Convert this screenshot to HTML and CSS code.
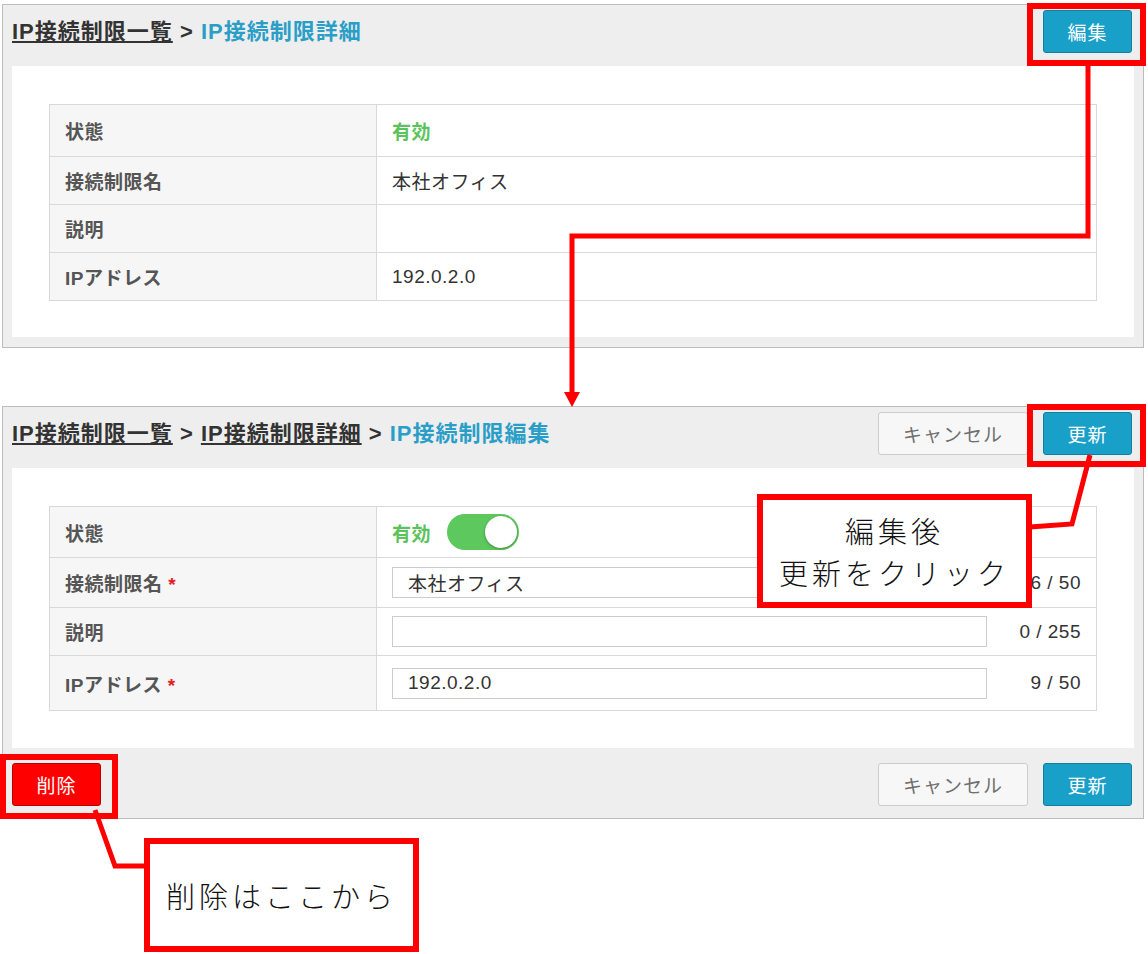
FILE: index.html
```html
<!DOCTYPE html>
<html lang="ja">
<head>
    <meta charset="UTF-8">
    <meta name="viewport" content="width=device-width, initial-scale=1.0">
    <title>IP接続制限</title>
<link rel="stylesheet" href="styles.css">
</head>
<body>
    <div class="page">
        <!-- 詳細画面 -->
        <section class="panel">
            <header class="panel-head">
                <h1 class="crumbs"><a href="#">IP接続制限一覧</a> &gt; <span class="current">IP接続制限詳細</span></h1>
                <div class="actions">
                    <button class="btn btn-primary">編集</button>
                </div>
            </header>
            <div class="panel-body">
                <table class="detail">
                    <tr class="row-status"><th>状態</th><td><span class="status-on">有効</span></td></tr>
                    <tr><th>接続制限名</th><td>本社オフィス</td></tr>
                    <tr><th>説明</th><td></td></tr>
                    <tr><th>IPアドレス</th><td>192.0.2.0</td></tr>
                </table>
            </div>
        </section>

        <!-- 編集画面 -->
        <section class="panel panel-edit">
            <header class="panel-head">
                <h1 class="crumbs"><a href="#">IP接続制限一覧</a> &gt; <a href="#">IP接続制限詳細</a> &gt; <span class="current">IP接続制限編集</span></h1>
                <div class="actions">
                    <button class="btn btn-cancel">キャンセル</button>
                    <button class="btn btn-primary">更新</button>
                </div>
            </header>
            <div class="panel-body">
                <table class="detail form">
                    <tr class="row-status">
                        <th>状態</th>
                        <td><div class="switch-wrap"><span class="status-on">有効</span><span class="switch"></span></div></td>
                    </tr>
                    <tr>
                        <th>接続制限名 <span class="req">*</span></th>
                        <td><div class="field"><input type="text" value="本社オフィス"><span class="count">6 / 50</span></div></td>
                    </tr>
                    <tr class="row-desc">
                        <th>説明</th>
                        <td><div class="field"><input type="text" value=""><span class="count">0 / 255</span></div></td>
                    </tr>
                    <tr class="row-ip">
                        <th>IPアドレス <span class="req">*</span></th>
                        <td><div class="field"><input type="text" value="192.0.2.0"><span class="count">9 / 50</span></div></td>
                    </tr>
                </table>
            </div>
            <footer class="panel-foot">
                <button class="btn btn-danger">削除</button>
                <div class="actions">
                    <button class="btn btn-cancel">キャンセル</button>
                    <button class="btn btn-primary">更新</button>
                </div>
            </footer>
        </section>

        <!-- 注釈 -->
        <svg class="marks" width="1148" height="954" viewBox="0 0 1148 954">
            <g fill="none" stroke="#ff0000">
                <rect x="1030" y="6" width="113" height="57" stroke-width="6"/>
                <polyline points="1088,66 1088,236 572,236 572,394" stroke-width="5"/>
                <rect x="1030" y="407" width="113" height="57" stroke-width="6"/>
                <polyline points="1090,455 1072,524 1030,527" stroke-width="5"/>
                <rect x="3" y="757" width="112" height="59" stroke-width="6"/>
                <polyline points="95,810 115,866 148,866" stroke-width="5"/>
            </g>
            <polygon points="564,392 580,392 572,407" fill="#ff0000"/>
        </svg>
        <div class="note note-update"><span class="note-line">編集後</span><span class="note-line">更新をクリック</span></div>
        <div class="note note-delete"><span class="note-line">削除はここから</span></div>
    </div>
</body>
</html>
```

FILE: styles.css
```css
*{
    box-sizing: border-box;
}
body{
    margin: 0;
    font-family: "Liberation Sans", "Noto Sans CJK JP", sans-serif;
    color: #333;
    background: #fff;
}
.page{
    position: relative;
    width: 1148px;
    height: 954px;
    padding: 4px 4px 0 2px;
    overflow: hidden;
}
.panel{
    background: #eee;
    border: 1px solid #bcbcbc;
}
.panel-edit{
    margin-top: 58px;
}
.panel-head{
    height: 61px;
    display: flex;
    justify-content: space-between;
    align-items: flex-start;
    padding: 5px 11px 0 9px;
}
.crumbs{
    margin: 0;
    font-size: 22px;
    line-height: 43px;
    font-weight: bold;
    letter-spacing: 1px;
    color: #333;
}
.crumbs a{
    color: #333;
    text-decoration: underline;
}
.crumbs .current{
    color: #2b9ec8;
}
.actions{
    display: flex;
    gap: 15px;
}
.panel-body{
    background: #fff;
    margin: 0 9px 10px;
    padding: 38px 37px 36px;
}
.panel-edit .panel-body{
    margin-bottom: 0;
    padding: 38px 37px 37px;
}
.panel-foot{
    height: 70px;
    display: flex;
    justify-content: space-between;
    align-items: flex-start;
    padding: 15px 11px 0 9px;
}

/* テーブル */
.detail{
    width: 100%;
    border-collapse: collapse;
    font-size: 19px;
    letter-spacing: 0.5px;
}
.detail th,
.detail td{
    border: 1px solid #d9d9d9;
    height: 48px;
    padding: 0 15px;
    text-align: left;
}
.detail th{
    width: 327px;
    background: #f6f6f6;
    color: #555;
    font-weight: bold;
}
.detail td{
    color: #333;
}
.detail .row-status th,
.detail .row-status td{
    height: 52px;
}
.status-on{
    color: #5cc35c;
    font-weight: bold;
}
.req{
    color: #e02020;
}
.form th,
.form td{
    padding-top: 0;
    padding-bottom: 0;
}
.form tr th,
.form tr td{
    height: 50px;
}
.form .row-status th,
.form .row-status td{
    height: 51px;
}
.form .row-desc th,
.form .row-desc td{
    height: 48px;
}
.form .row-ip th,
.form .row-ip td{
    height: 55px;
}

/* 入力欄 */
.field{
    display: flex;
    align-items: center;
}
.field input{
    flex: 1;
    height: 31px;
    border: 1px solid #ccc;
    padding: 0 15px;
    font-family: inherit;
    font-size: 19px;
    letter-spacing: 0.5px;
    color: #333;
}
.count{
    width: 94px;
    text-align: right;
}
.switch-wrap{
    display: flex;
    align-items: center;
    gap: 16px;
}
.switch{
    position: relative;
    width: 72px;
    height: 36px;
    border-radius: 18px;
    background: #5dc85d;
}
.switch::after{
    content: "";
    position: absolute;
    top: 2px;
    right: 2px;
    width: 32px;
    height: 32px;
    border-radius: 50%;
    background: #fff;
    box-shadow: 0 1px 3px rgba(0, 0, 0, 0.3);
}

/* ボタン */
.btn{
    height: 43px;
    padding: 0;
    border-radius: 3px;
    font-family: inherit;
    font-size: 19px;
    letter-spacing: 1px;
    cursor: pointer;
}
.btn-primary{
    width: 89px;
    background: #18a0c9;
    border: 1px solid #11809f;
    color: #fff;
}
.btn-cancel{
    width: 150px;
    background: #f7f7f7;
    border: 1px solid #ccc;
    color: #6f6f6f;
}
.btn-danger{
    width: 89px;
    background: #f00;
    border: 1px solid #b00;
    color: #fff;
}

/* 注釈 */
.marks{
    position: absolute;
    top: 0;
    left: 0;
    pointer-events: none;
}
.note{
    position: absolute;
    display: flex;
    flex-direction: column;
    align-items: center;
    justify-content: center;
    width: 275px;
    height: 114px;
    border: 6px solid #f00;
    background: #fff;
    font-family: "Noto Sans CJK JP", sans-serif;
    font-weight: 300;
    font-size: 29px;
    letter-spacing: 4px;
    text-align: center;
    color: #111;
}
.note-line{
    display: block;
    line-height: 42px;
}
.note-update{
    left: 757px;
    top: 494px;
}
.note-delete{
    left: 144px;
    top: 838px;
}
```
